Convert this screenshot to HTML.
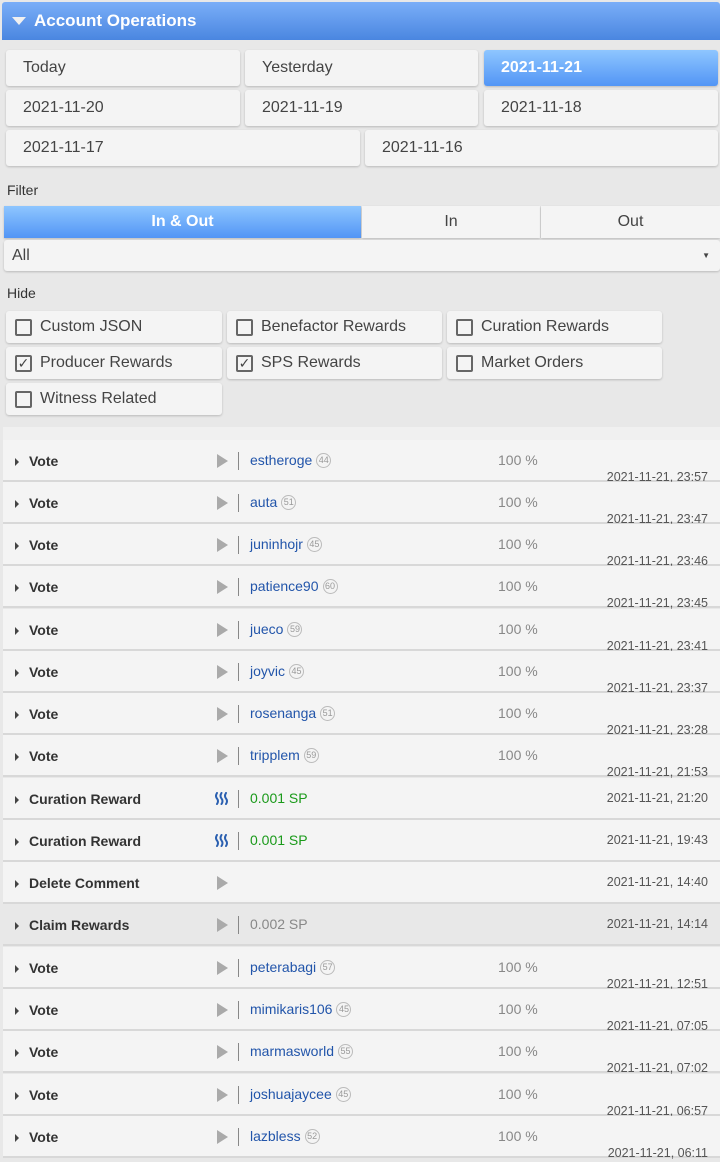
<!DOCTYPE html>
<html><head><meta charset="utf-8"><style>
*{box-sizing:border-box;margin:0;padding:0}
body{width:720px;height:1162px;background:#e8e8e8;font-family:"Liberation Sans","DejaVu Sans",sans-serif;position:relative;overflow:hidden;color:#333}
.a{position:absolute}
.hdr{left:2px;top:2px;width:718px;height:38px;background:linear-gradient(#7aaef8,#4a86e0);color:#fff;font-size:17px;font-weight:bold;line-height:38px;padding-left:32px;border-radius:3px 3px 0 0}
.hdr:before{content:"";position:absolute;left:10px;top:15px;border-left:7px solid transparent;border-right:7px solid transparent;border-top:8px solid #f0f0f0}
.btn{background:#f4f4f4;border-radius:3px;box-shadow:0 1px 2px rgba(0,0,0,.2);font-size:16px;line-height:36px;padding-left:17px;color:#444}
.lbl{font-size:14px;color:#333}
.seg{top:206px;height:32px;background:#f4f4f4;font-size:16px;line-height:31px;text-align:center;color:#444;box-shadow:0 1px 2px rgba(0,0,0,.2)}
.sel{background:linear-gradient(#8ec6ff,#5295f5);color:#fff;font-weight:bold}
.cb{background:#f4f4f4;border-radius:3px;box-shadow:0 1px 2px rgba(0,0,0,.2);height:32px;font-size:16px;line-height:32px;padding-left:34px;color:#444}
.cb i{position:absolute;left:9px;top:8px;width:17px;height:17px;border:2px solid #666;border-radius:2px;font-style:normal;font-size:14px;line-height:13px;text-align:center;color:#444}
.row{left:3px;width:717px;height:42px;background:#f4f4f4;border-bottom:2px solid #d8d8d8;font-size:14px}
.row .t{position:absolute;left:12px;top:13px;font-weight:bold;color:#333;padding-left:14px}
.row .t:before{content:"";position:absolute;left:0;top:5px;border-top:4px solid transparent;border-bottom:4px solid transparent;border-left:4px solid #444}
.pl{position:absolute;left:214px;top:14px;border-top:7px solid transparent;border-bottom:7px solid transparent;border-left:11px solid #aaa}
.bar{position:absolute;left:235px;top:12px;width:1px;height:18px;background:#888}
.who{position:absolute;left:247px;top:12px;color:#2255aa}
.rep{display:inline-block;width:15px;height:15px;border:1px solid #bbb;border-radius:50%;font-size:9px;line-height:13px;text-align:center;color:#999;vertical-align:2px;margin-left:4px}
.pct{position:absolute;left:495px;top:12px;color:#888}
.d{position:absolute;right:12px;color:#555;font-size:12.5px}
.amt{position:absolute;left:247px;top:12px;color:#1a9a1a}
.st{position:absolute;left:212px;top:14px}
</style></head><body>
<div class="a hdr">Account Operations</div>
<div class="a btn" style="left:6px;top:50px;width:234px;height:36px">Today</div>
<div class="a btn" style="left:245px;top:50px;width:233px;height:36px">Yesterday</div>
<div class="a btn sel" style="left:484px;top:50px;width:234px;height:36px">2021-11-21</div>
<div class="a btn" style="left:6px;top:90px;width:234px;height:36px">2021-11-20</div>
<div class="a btn" style="left:245px;top:90px;width:233px;height:36px">2021-11-19</div>
<div class="a btn" style="left:484px;top:90px;width:234px;height:36px">2021-11-18</div>
<div class="a btn" style="left:6px;top:130px;width:354px;height:36px">2021-11-17</div>
<div class="a btn" style="left:365px;top:130px;width:353px;height:36px">2021-11-16</div>
<div class="a lbl" style="left:7px;top:182px">Filter</div>
<div class="a seg sel" style="left:4px;width:357px">In &amp; Out</div>
<div class="a seg" style="left:362px;width:178px">In</div>
<div class="a seg" style="left:541px;width:179px">Out</div>
<div class="a btn" style="left:4px;top:240px;width:716px;height:31px;line-height:31px;padding-left:8px">All<span style="position:absolute;right:10px;font-size:8px">▼</span></div>
<div class="a lbl" style="left:7px;top:285px">Hide</div>
<div class="a cb" style="left:6px;top:311px;width:216px"><i></i>Custom JSON</div>
<div class="a cb" style="left:227px;top:311px;width:215px"><i></i>Benefactor Rewards</div>
<div class="a cb" style="left:447px;top:311px;width:215px"><i></i>Curation Rewards</div>
<div class="a cb" style="left:6px;top:347px;width:216px"><i>✓</i>Producer Rewards</div>
<div class="a cb" style="left:227px;top:347px;width:215px"><i>✓</i>SPS Rewards</div>
<div class="a cb" style="left:447px;top:347px;width:215px"><i></i>Market Orders</div>
<div class="a cb" style="left:6px;top:383px;width:216px"><i></i>Witness Related</div>
<div class="a" style="left:3px;top:427px;width:717px;height:14px;background:#f0f0f0"></div>

<div class="a row" style="top:440px"><span class="t">Vote</span><span class="pl"></span><span class="bar"></span><span class="who">estheroge<span class="rep">44</span></span><span class="pct">100 %</span><span class="d" style="top:30px">2021-11-21, 23:57</span></div>
<div class="a row" style="top:482px"><span class="t">Vote</span><span class="pl"></span><span class="bar"></span><span class="who">auta<span class="rep">51</span></span><span class="pct">100 %</span><span class="d" style="top:30px">2021-11-21, 23:47</span></div>
<div class="a row" style="top:524px"><span class="t">Vote</span><span class="pl"></span><span class="bar"></span><span class="who">juninhojr<span class="rep">45</span></span><span class="pct">100 %</span><span class="d" style="top:30px">2021-11-21, 23:46</span></div>
<div class="a row" style="top:566px"><span class="t">Vote</span><span class="pl"></span><span class="bar"></span><span class="who">patience90<span class="rep">60</span></span><span class="pct">100 %</span><span class="d" style="top:30px">2021-11-21, 23:45</span></div>
<div class="a row" style="top:609px"><span class="t">Vote</span><span class="pl"></span><span class="bar"></span><span class="who">jueco<span class="rep">59</span></span><span class="pct">100 %</span><span class="d" style="top:30px">2021-11-21, 23:41</span></div>
<div class="a row" style="top:651px"><span class="t">Vote</span><span class="pl"></span><span class="bar"></span><span class="who">joyvic<span class="rep">45</span></span><span class="pct">100 %</span><span class="d" style="top:30px">2021-11-21, 23:37</span></div>
<div class="a row" style="top:693px"><span class="t">Vote</span><span class="pl"></span><span class="bar"></span><span class="who">rosenanga<span class="rep">51</span></span><span class="pct">100 %</span><span class="d" style="top:30px">2021-11-21, 23:28</span></div>
<div class="a row" style="top:735px"><span class="t">Vote</span><span class="pl"></span><span class="bar"></span><span class="who">tripplem<span class="rep">59</span></span><span class="pct">100 %</span><span class="d" style="top:30px">2021-11-21, 21:53</span></div>
<div class="a row" style="top:778px"><span class="t">Curation Reward</span><svg class="st" width="14" height="13" viewBox="0 0 14 13"><g fill="none" stroke="#2a5fb0" stroke-width="2" stroke-linecap="round"><path d="M2 1q-2 3 0 5.5t0 5.5"/><path d="M6.5 1q-2 3 0 5.5t0 5.5"/><path d="M11 1q-2 3 0 5.5t0 5.5"/></g></svg><span class="bar"></span><span class="amt">0.001 SP</span><span class="d" style="top:13px">2021-11-21, 21:20</span></div>
<div class="a row" style="top:820px"><span class="t">Curation Reward</span><svg class="st" width="14" height="13" viewBox="0 0 14 13"><g fill="none" stroke="#2a5fb0" stroke-width="2" stroke-linecap="round"><path d="M2 1q-2 3 0 5.5t0 5.5"/><path d="M6.5 1q-2 3 0 5.5t0 5.5"/><path d="M11 1q-2 3 0 5.5t0 5.5"/></g></svg><span class="bar"></span><span class="amt">0.001 SP</span><span class="d" style="top:13px">2021-11-21, 19:43</span></div>
<div class="a row" style="top:862px"><span class="t">Delete Comment</span><span class="pl"></span><span class="d" style="top:13px">2021-11-21, 14:40</span></div>
<div class="a row" style="top:904px;background:#e8e8e8"><span class="t">Claim Rewards</span><span class="pl"></span><span class="bar"></span><span class="amt" style="color:#888">0.002 SP</span><span class="d" style="top:13px">2021-11-21, 14:14</span></div>
<div class="a row" style="top:947px"><span class="t">Vote</span><span class="pl"></span><span class="bar"></span><span class="who">peterabagi<span class="rep">57</span></span><span class="pct">100 %</span><span class="d" style="top:30px">2021-11-21, 12:51</span></div>
<div class="a row" style="top:989px"><span class="t">Vote</span><span class="pl"></span><span class="bar"></span><span class="who">mimikaris106<span class="rep">45</span></span><span class="pct">100 %</span><span class="d" style="top:30px">2021-11-21, 07:05</span></div>
<div class="a row" style="top:1031px"><span class="t">Vote</span><span class="pl"></span><span class="bar"></span><span class="who">marmasworld<span class="rep">55</span></span><span class="pct">100 %</span><span class="d" style="top:30px">2021-11-21, 07:02</span></div>
<div class="a row" style="top:1074px"><span class="t">Vote</span><span class="pl"></span><span class="bar"></span><span class="who">joshuajaycee<span class="rep">45</span></span><span class="pct">100 %</span><span class="d" style="top:30px">2021-11-21, 06:57</span></div>
<div class="a row" style="top:1116px"><span class="t">Vote</span><span class="pl"></span><span class="bar"></span><span class="who">lazbless<span class="rep">52</span></span><span class="pct">100 %</span><span class="d" style="top:30px">2021-11-21, 06:11</span></div>
</body></html>
